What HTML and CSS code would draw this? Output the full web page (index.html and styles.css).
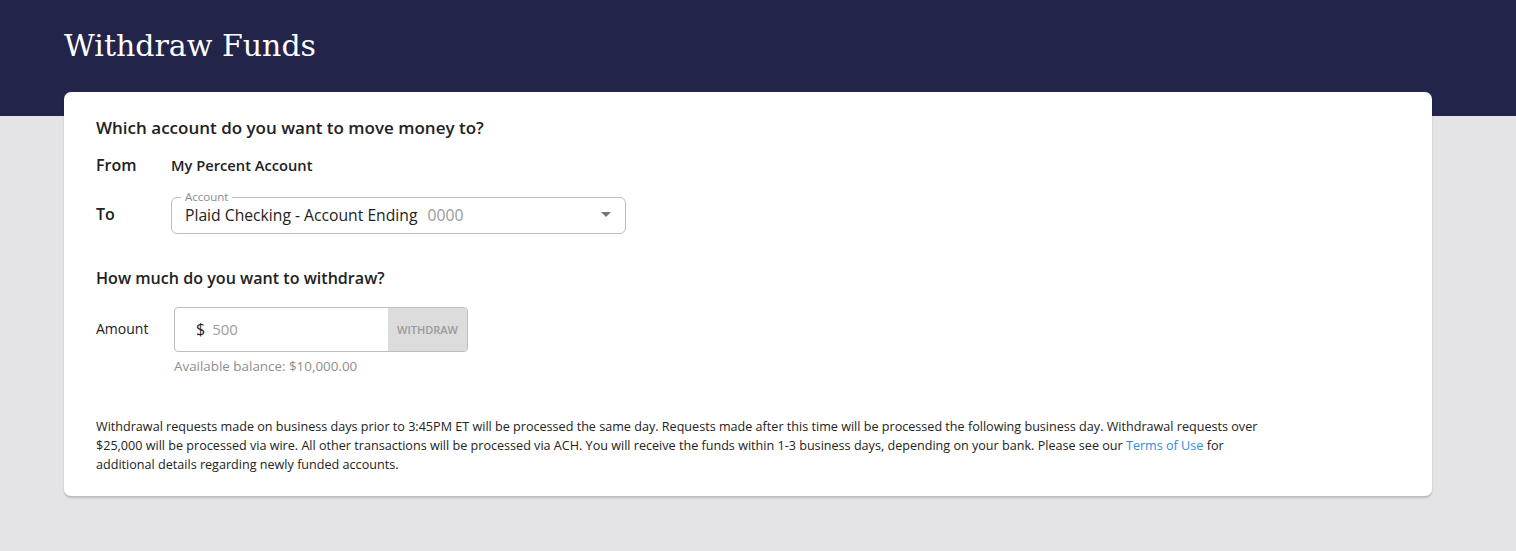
FILE: index.html
```html
<!DOCTYPE html>
<html>
<head>
<meta charset="utf-8">
<link rel="stylesheet" href="styles.css">
</head>
<body>
<div class="page">
  <header class="top">
    <h1 class="title">Withdraw Funds</h1>
  </header>
  <main class="card">
    <h2 class="section-title">Which account do you want to move money to?</h2>
    <div class="row row-from">
      <span class="row-label">From</span>
      <span class="from-value">My Percent Account</span>
    </div>
    <div class="row row-to">
      <span class="row-label to-label">To</span>
      <div class="select">
        <span class="select-legend">Account</span>
        <span class="select-value">Plaid Checking - Account Ending <span class="muted">0000</span></span>
        <svg class="select-arrow" width="10" height="5" viewBox="0 0 10 5"><path d="M0 0h10L5 5z" fill="#757575"/></svg>
      </div>
    </div>
    <h2 class="section-title section-amount">How much do you want to withdraw?</h2>
    <div class="amount-row">
      <span class="amount-label">Amount</span>
      <div class="amount-col">
        <div class="amount-box">
          <span class="dollar">$</span>
          <span class="amount-value">500</span>
          <button class="withdraw-btn">WITHDRAW</button>
        </div>
        <div class="balance">Available balance: $10,000.00</div>
      </div>
    </div>
    <p class="disclaimer">Withdrawal requests made on business days prior to 3:45PM ET will be processed the same day. Requests made after this time will be processed the following business day. Withdrawal requests over $25,000 will be processed via wire. All other transactions will be processed via ACH. You will receive the funds within 1-3 business days, depending on your bank. Please see our <a class="link" href="#">Terms of Use</a> for additional details regarding newly funded accounts.</p>
  </main>
</div>
</body>
</html>
```
FILE: styles.css
```css
* { box-sizing: border-box; }
html, body { margin: 0; padding: 0; }
body {
  font-family: "Open Sans", "Noto Sans", sans-serif;
  color: #222;
}
.page {
  min-height: 551px;
  background: linear-gradient(to bottom, #22244a 0, #22244a 116px, #e4e4e6 116px);
  padding: 0 84px 0 64px;
}
.top {
  height: 92px;
  padding-top: 25px;
}
.title {
  margin: 0;
  font-family: "DejaVu Serif", serif;
  font-weight: 400;
  font-size: 30px;
  line-height: 42px;
  color: #fff;
}
.card {
  width: 1368px;
  background: #fff;
  border-radius: 7px;
  box-shadow: 0 2px 2px rgba(0,0,0,0.18);
  padding: 24px 32px 22px 32px;
}
.section-title {
  margin: 0;
  font-size: 17px;
  font-weight: 600;
  line-height: 24px;
  color: #222;
}
.row {
  display: flex;
  align-items: center;
}
.row-from { margin-top: 13px; height: 24px; }
.row-label {
  width: 75px;
  font-size: 16px;
  font-weight: 600;
}
.to-label { padding-bottom: 3px; }
.from-value {
  font-size: 14.7px;
  font-weight: 600;
}
.row-to { margin-top: 20px; }
.select {
  position: relative;
  width: 455px;
  height: 37px;
  border: 1px solid #bdbdbd;
  border-radius: 6px;
  display: flex;
  align-items: center;
  padding: 0 13px 2px 13px;
}
.select-legend {
  position: absolute;
  top: -8px;
  left: 9px;
  padding: 0 4px;
  background: #fff;
  font-size: 11.5px;
  line-height: 14px;
  color: #8a8a8a;
}
.select-value {
  font-size: 15.7px;
  line-height: 20px;
  color: #222;
}
.muted { color: #9a9a9a; margin-left: 6px; }
.select-arrow {
  position: absolute;
  right: 14px;
  top: 14px;
}
.section-amount { margin-top: 32px; font-size: 16.1px; }
.amount-row {
  display: flex;
  margin-top: 17px;
}
.amount-label {
  width: 78px;
  font-size: 14px;
  line-height: 43px;
  font-weight: 500;
}
.amount-col { display: flex; flex-direction: column; }
.amount-box {
  display: flex;
  align-items: center;
  width: 294px;
  height: 45px;
  border: 1px solid #bdbdbd;
  border-radius: 4px;
  overflow: hidden;
}
.dollar {
  margin-left: 21px;
  font-size: 16px;
  line-height: 20px;
  padding-bottom: 2px;
  color: #222;
}
.amount-value {
  margin-left: 7px;
  font-size: 15px;
  line-height: 20px;
  padding-bottom: 2px;
  color: #9e9e9e;
  flex: 1;
}
.withdraw-btn {
  width: 79px;
  height: 100%;
  border: none;
  background: #dcdcdc;
  color: #9a9a9a;
  font-family: inherit;
  font-size: 11px;
  font-weight: 600;
  padding: 0;
}
.balance {
  margin-top: 5px;
  font-size: 13.4px;
  line-height: 18px;
  color: #8e8e8e;
}
.disclaimer {
  margin: 42px 0 0 0;
  max-width: 1180px;
  font-size: 12.6px;
  line-height: 19px;
  color: #222;
}
.link { color: #2e8be6; text-decoration: none; }
```
